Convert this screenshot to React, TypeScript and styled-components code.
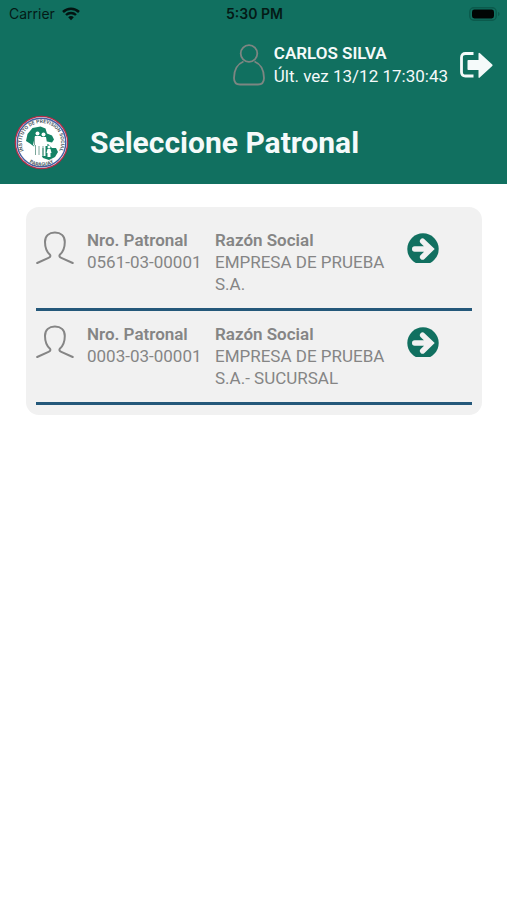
import React from "react";
import styled, { createGlobalStyle } from "styled-components";

const GlobalStyle = createGlobalStyle`
  * { box-sizing: border-box; }
  body {
    margin: 0;
    background: #ffffff;
    font-family: Roboto, "Liberation Sans", sans-serif;
  }
  h1, p, dl, dt, dd, ul { margin: 0; padding: 0; }
`;

const Header = styled.header`
  background: #117060;
  color: #f5fafa;
`;

const StatusBar = styled.div`
  display: grid;
  grid-template-columns: 1fr auto 1fr;
  align-items: center;
  height: 28px;
  padding: 0 7px 0 9px;
  color: #041a16;
  font-family: Inter, "Liberation Sans", sans-serif;
  font-size: 14px;
  line-height: 20px;
`;

const Carrier = styled.div`
  display: flex;
  align-items: center;
  gap: 7px;
`;

const Clock = styled.time`
  font-weight: 600;
`;

const Battery = styled.svg`
  justify-self: end;
`;

const UserBar = styled.div`
  display: flex;
  justify-content: flex-end;
  align-items: center;
  height: 73px;
  padding: 0 14px 0 0;
`;

const UserText = styled.div`
  margin: 0 11px 0 9px;
  font-size: 17px;
  line-height: 23px;
`;

const UserName = styled.p`
  font-weight: 600;
`;

const IconButton = styled.button`
  display: block;
  padding: 0;
  border: 0;
  background: none;
  cursor: pointer;

  svg { display: block; }
`;

const TitleBar = styled.div`
  display: flex;
  align-items: center;
  gap: 21px;
  height: 83px;
  padding: 0 14px;
`;

const Title = styled.h1`
  font-size: 30px;
  line-height: 40px;
  font-weight: 700;
`;

const Main = styled.main`
  padding: 23px 25px 24px 26px;
`;

const Card = styled.ul`
  padding: 10px;
  border-radius: 13px;
  background: #f1f1f1;
  list-style: none;
`;

const Row = styled.li`
  display: grid;
  grid-template-columns: 51px 128px minmax(0, 1fr) 65px;
  align-items: start;
  min-height: 94px;
  padding: 12px 0;
  border-bottom: 3px solid #24587a;
  color: #858585;

  & > svg { margin-top: 2px; }
  & > button { margin-top: 4px; justify-self: start; }
`;

const Field = styled.dl`
  font-size: 17px;
  line-height: 22px;
`;

const Label = styled.dt`
  font-weight: 600;
`;

const Value = styled.dd``;

const WifiIcon = () => (
  <svg width="18" height="14" viewBox="0 0 18 14" fill="none" aria-hidden="true">
    <path d="M1 5C5.500 .7 12.500 .7 17 5" stroke="#031411" strokeWidth="2.500" />
    <path d="M4 8C6.800 5.300 11.200 5.300 14 8" stroke="#031411" strokeWidth="2.400" />
    <path d="M6.200 10.200C7.800 8.700 10.200 8.700 11.800 10.200L9 13.300Z" fill="#031411" />
  </svg>
);

const BatteryIcon = () => (
  <Battery width="31" height="14" viewBox="0 0 31 14" aria-hidden="true">
    <rect x=".8" y=".8" width="26.400" height="12.400" rx="4" fill="none" stroke="#0b5a4c" strokeWidth="1.400" />
    <rect x="3" y="2.500" width="22" height="9" rx="2.400" fill="#010504" />
    <path d="M29 5c2 .5 2 3.500 0 4z" fill="#0b5a4c" />
  </Battery>
);

const AccountIcon = () => (
  <svg width="32" height="42" viewBox="0 0 32 42" fill="none" stroke="#7d8682" strokeWidth="1.800" aria-hidden="true">
    <circle cx="16" cy="9.500" r="8.300" />
    <path d="M10.500 17.500C4.500 20 1 26 1 34c0 4.500 2 6.500 6 6.500h18c4 0 6-2 6-6.500 0-8-3.500-14-9.500-16.500" />
  </svg>
);

const LogoutIcon = () => (
  <svg width="34" height="28" viewBox="0 0 34 28" aria-hidden="true">
    <path d="M14.500 2.500H6.500C4 2.500 2.500 4 2.500 6.500v14.500c0 2.500 1.500 4 4 4h8" fill="none" stroke="#f5fafa" strokeWidth="2.800" />
    <path d="M9.300 9h10.200V3q0-2 1.500-.7l12 11q1.200 1 0 2l-12 11q-1.500 1.400-1.500-.6V19H9.300q-.8 0-.8-.8V9.800q0-.8.8-.8z" fill="#f5fafa" />
  </svg>
);

const PersonIcon = () => (
  <svg width="38" height="34" viewBox="0 0 38 34" fill="none" stroke="#858585" strokeWidth="2" strokeLinecap="round" strokeLinejoin="round" aria-hidden="true">
    <path d="M1.200 32L12.500 26.800C14.300 26 14.800 25 14 23.800 10.300 20.500 9 16.500 9 11 9 5 13 1.500 18.900 1.500S28.800 5 28.800 11c0 5.500-1.300 9.500-5 12.800-.8 1.200-.3 2.200 1.500 3L36.700 32" />
  </svg>
);

const ArrowIcon = () => (
  <svg width="32" height="30" viewBox="0 0 32 30" fill="none" aria-hidden="true">
    <circle cx="16" cy="16" r="15.700" fill="#117060" />
    <path d="M7.700 16H23M15.600 8.200L23.800 16L15.600 24" stroke="#f1f1f1" strokeWidth="5.400" strokeLinecap="round" strokeLinejoin="miter" />
  </svg>
);

const Logo = () => (
  <svg width="55" height="55" viewBox="0 0 55 55" role="img" aria-label="Instituto de Previsión Social, Paraguay">
    <defs>
      <path id="upper-ring" d="M13.300 41A19.600 19.600 0 1 1 41.700 41" />
      <path id="lower-ring" d="M10 43A23 23 0 0 0 45 43" />
    </defs>
    <circle cx="27.500" cy="27.500" r="26.800" fill="#b62c49" />
    <circle cx="27.500" cy="27.500" r="25.500" fill="#f8fafb" />
    <circle cx="27.500" cy="27.500" r="24.300" fill="#ffffff" stroke="#465e9f" strokeWidth="1.400" />
    <g fill="#4c5a62" fontSize="5" fontWeight="700">
      <text textAnchor="middle">
        <textPath href="#upper-ring" startOffset="50%">INSTITUTO DE PREVISION SOCIAL</textPath>
      </text>
      <text textAnchor="middle">
        <textPath href="#lower-ring" startOffset="50%">PARAGUAY</textPath>
      </text>
    </g>
    <path d="M12 26l1.500-7 5-6 8-1.500 5 2 1.500 5 5 2 2 4-2 3-5-1-10 1-3 4-4-3z" fill="#148365" />
    <path d="M28 32l6-3 4 4 4 0 2 4-3 5-6 3-6-2-3-5z" fill="#148365" />
    <circle cx="23.500" cy="18.500" r="2" fill="#fff" />
    <circle cx="29.500" cy="19.500" r="2" fill="#fff" />
    <path d="M21 21h5.500l1 1h4.500l1.500 9h-2v10h-2v-8h-1v8h-3v-9h-1v9h-3.500V31l-2-1z" fill="#fff" />
    <path d="M21.500 30v10M25 31v9M29 31v9M20.500 23v7" stroke="#6c9c8f" strokeWidth=".9" />
    <circle cx="35" cy="32" r="1.500" fill="#fff" />
    <path d="M33.500 34h3l1 4h-1v4h-3v-4h-1z" fill="#fff" />
  </svg>
);

const employers = [
  { number: "0561-03-00001", name: "EMPRESA DE PRUEBA S.A." },
  { number: "0003-03-00001", name: "EMPRESA DE PRUEBA S.A.- SUCURSAL" },
];

export default function App() {
  return (
    <>
      <GlobalStyle />
      <Header>
        <StatusBar>
          <Carrier>Carrier <WifiIcon /></Carrier>
          <Clock>5:30 PM</Clock>
          <BatteryIcon />
        </StatusBar>
        <UserBar>
          <AccountIcon />
          <UserText>
            <UserName>CARLOS SILVA</UserName>
            <p>Últ. vez 13/12 17:30:43</p>
          </UserText>
          <IconButton type="button" aria-label="Cerrar sesión">
            <LogoutIcon />
          </IconButton>
        </UserBar>
        <TitleBar>
          <Logo />
          <Title>Seleccione Patronal</Title>
        </TitleBar>
      </Header>
      <Main>
        <Card>
          {employers.map((employer) => (
            <Row key={employer.number}>
              <PersonIcon />
              <Field>
                <Label>Nro. Patronal</Label>
                <Value>{employer.number}</Value>
              </Field>
              <Field>
                <Label>Razón Social</Label>
                <Value>{employer.name}</Value>
              </Field>
              <IconButton type="button" aria-label={`Seleccionar ${employer.name}`}>
                <ArrowIcon />
              </IconButton>
            </Row>
          ))}
        </Card>
      </Main>
    </>
  );
}
